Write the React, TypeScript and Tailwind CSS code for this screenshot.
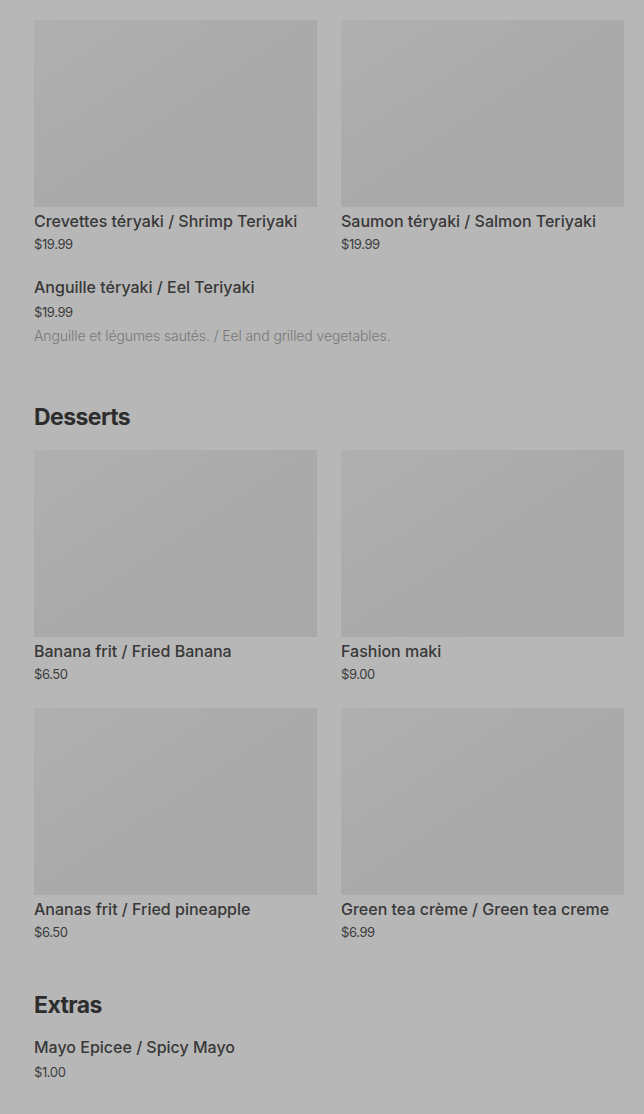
type Item = { title: string; price: string; description?: string };

const Thumb = () => (
  <div className="h-[187px] w-full bg-linear-to-br from-[#b0b0b0] via-[#aaaaaa] to-[#a9a9a9]" />
);

const GridItem = ({ item }: { item: Item }) => (
  <div className="flex flex-col">
    <Thumb />
    <div className="mt-1 text-[16px] leading-5 font-medium text-[#383838] whitespace-nowrap">
      {item.title}
    </div>
    <div className="mt-1 text-[13px] leading-[18px] tracking-[-0.4px] text-[#3c3c3c]">
      {item.price}
    </div>
  </div>
);

const TextItem = ({ item }: { item: Item }) => (
  <div className="flex flex-col">
    <div className="text-[16px] leading-5 font-medium text-[#383838]">{item.title}</div>
    <div className="mt-1.5 text-[13px] leading-[18px] tracking-[-0.4px] text-[#3c3c3c]">
      {item.price}
    </div>
    {item.description && (
      <div className="mt-[5px] text-[14px] leading-5 font-light tracking-[-0.1px] text-[#777777]">
        {item.description}
      </div>
    )}
  </div>
);

const teriyaki: Item[] = [
  { title: 'Crevettes téryaki / Shrimp Teriyaki', price: '$19.99' },
  { title: 'Saumon téryaki / Salmon Teriyaki', price: '$19.99' },
];

const desserts: Item[] = [
  { title: 'Banana frit / Fried Banana', price: '$6.50' },
  { title: 'Fashion maki', price: '$9.00' },
  { title: 'Ananas frit / Fried pineapple', price: '$6.50' },
  { title: 'Green tea crème / Green tea creme', price: '$6.99' },
];

export default function App() {
  return (
    <div
      className="min-h-screen bg-[#b7b7b7] pl-[34px] pr-5 pt-5 pb-8"
      style={{ fontFamily: 'Inter, "Noto Sans", sans-serif' }}
    >
      {/* Teriyaki */}
      <div className="grid grid-cols-2 gap-x-6">
        {teriyaki.map((it) => (
          <GridItem key={it.title} item={it} />
        ))}
      </div>
      <div className="mt-6">
        <TextItem
          item={{
            title: 'Anguille téryaki / Eel Teriyaki',
            price: '$19.99',
            description: 'Anguille et légumes sautés. / Eel and grilled vegetables.',
          }}
        />
      </div>

      {/* Desserts */}
      <h2 className="mt-[55px] text-[23px] leading-8 font-bold tracking-tight text-[#2d2d2d]">
        Desserts
      </h2>
      <div className="mt-[17px] grid grid-cols-2 gap-x-6 gap-y-[25px]">
        {desserts.map((it) => (
          <GridItem key={it.title} item={it} />
        ))}
      </div>

      {/* Extras */}
      <h2 className="mt-12 text-[23px] leading-8 font-bold tracking-tight text-[#2d2d2d]">
        Extras
      </h2>
      <div className="mt-4">
        <TextItem item={{ title: 'Mayo Epicee / Spicy Mayo', price: '$1.00' }} />
      </div>
    </div>
  );
}
